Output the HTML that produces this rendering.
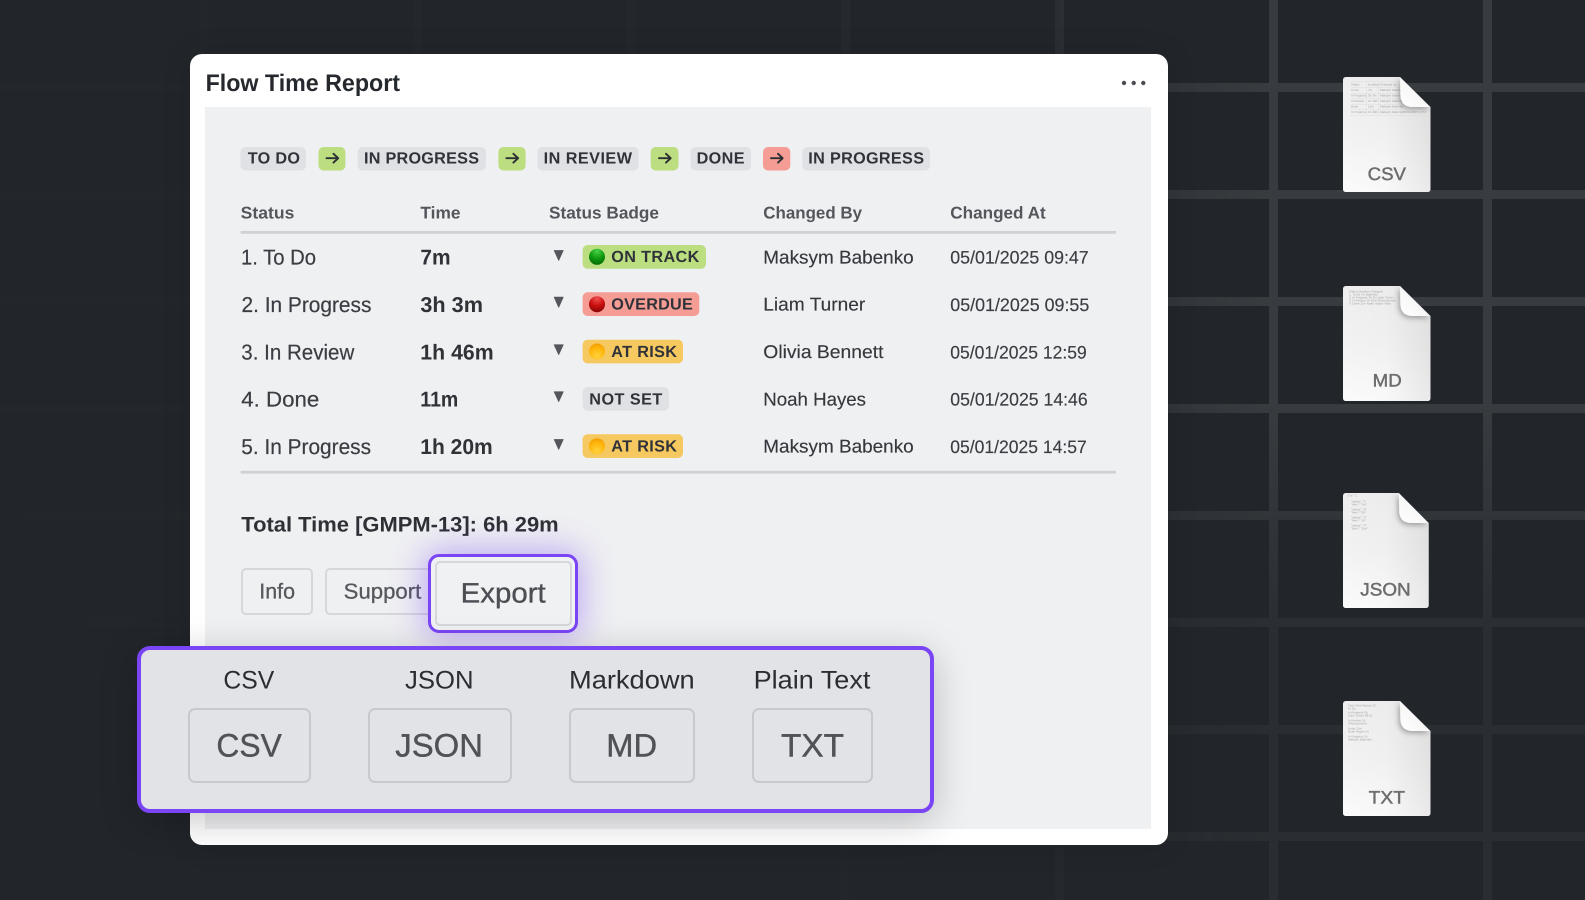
<!DOCTYPE html>
<html lang="en">
<head>
<meta charset="utf-8">
<title>Flow Time Report</title>
<style>
html,body{margin:0;padding:0;background:#22262b;width:1585px;height:900px;overflow:hidden}
*{box-sizing:border-box}
#root{position:relative;width:1585px;height:900px;overflow:hidden;background:#22262b;filter:blur(.35px)}
.abs{position:absolute}
.m1{position:absolute;left:0;top:0;width:1585px;height:900px;-webkit-mask-image:linear-gradient(to right,rgba(0,0,0,.06) 0,rgba(0,0,0,.1) 40%,rgba(0,0,0,.22) 62%,rgba(0,0,0,1) 80%);mask-image:linear-gradient(to right,rgba(0,0,0,.06) 0,rgba(0,0,0,.1) 40%,rgba(0,0,0,.22) 62%,rgba(0,0,0,1) 80%)}
.m2{position:absolute;left:0;top:0;width:1585px;height:900px;-webkit-mask-image:linear-gradient(to bottom,#000 0,#000 45%,rgba(0,0,0,.35) 72%,rgba(0,0,0,.35) 100%);mask-image:linear-gradient(to bottom,#000 0,#000 45%,rgba(0,0,0,.35) 72%,rgba(0,0,0,.35) 100%)}
#card{left:190px;top:54px;width:978px;height:791px;background:#fff;border-radius:12px;box-shadow:0 0 30px rgba(0,0,0,.12)}
#panel{left:205px;top:107px;width:946px;height:722px;background:#eff0f2}
#export{left:428px;top:554px;width:150px;height:79px;border:3.5px solid #7a45f5;border-radius:11px;box-shadow:0 0 32px 4px rgba(122,69,245,.42);background:#f0f1f3}
#exportin{left:435px;top:561px;width:137px;height:65px;border:2px solid #d6d7da;border-radius:5px;background:#f0f1f3}
#pop{left:137px;top:646px;width:797px;height:167px;border:4px solid #7a45f5;border-radius:13px;background:#e2e3e6;box-shadow:0 8px 38px rgba(0,0,0,.22)}
.btn{position:absolute;border:2px solid #d6d7da;border-radius:5px}
.pb{position:absolute;border:2px solid #c8c9cc;border-radius:7px;top:708px;height:75px}
svg{position:absolute;left:0;top:0;overflow:visible}
text{font-family:"Liberation Sans",sans-serif;text-rendering:geometricPrecision;transform:translate(0,-.6px)}
.chip{font-size:16.2px;font-weight:700;fill:#2f3238}
.hd{font-size:17px;font-weight:700;fill:#54565c}
.st{font-size:21.5px;fill:#3a3d42;stroke:#3a3d42;stroke-width:.2px;transform:translate(0,-1px)}
.tm{font-size:21.5px;font-weight:700;fill:#2f3236;transform:translate(0,-1px)}
.by{font-size:18.5px;fill:#34373c;stroke:#34373c;stroke-width:.15px}
.at{font-size:18px;fill:#3a3d42;stroke:#3a3d42;stroke-width:.15px}
.bd{font-size:16.2px;font-weight:700;fill:#2f3238}
.lab{font-size:25.5px;fill:#2b2d31}
.pt{font-size:32.5px;fill:#505257;stroke:#505257;stroke-width:.4px}
.fl{font-size:18px;fill:#6c6c6c;stroke:#6c6c6c;stroke-width:.45px}
.ti{font-size:3px;fill:#a4a4a4}
</style>
</head>
<body>
<div id="root">

<div class="m1"><div class="m2">
<svg width="1585" height="900">
<g fill="#383c40">
<rect x="199" y="0" width="9" height="900"/><rect x="413" y="0" width="9" height="900"/><rect x="627" y="0" width="9" height="900"/><rect x="841" y="0" width="9" height="900"/><rect x="1055" y="0" width="9" height="900"/><rect x="1269" y="0" width="9" height="900"/><rect x="1483" y="0" width="9" height="900"/>
<rect x="0" y="83" width="1585" height="9"/><rect x="0" y="190" width="1585" height="9"/><rect x="0" y="297" width="1585" height="9"/><rect x="0" y="404" width="1585" height="9"/><rect x="0" y="511" width="1585" height="9"/><rect x="0" y="618" width="1585" height="9"/><rect x="0" y="725" width="1585" height="9"/><rect x="0" y="832" width="1585" height="9"/>
</g>
</svg>
</div></div>

<div id="card" class="abs"></div>
<div id="panel" class="abs"></div>
<div class="btn" style="left:241px;top:568px;width:72px;height:47px"></div>
<div class="btn" style="left:325px;top:568px;width:115px;height:47px"></div>

<svg width="1585" height="900">
<defs>
<radialGradient id="dg" cx=".5" cy=".15" r=".85"><stop offset="0" stop-color="#49d049"/><stop offset=".55" stop-color="#0f9a0f"/><stop offset="1" stop-color="#056a05"/></radialGradient>
<radialGradient id="dr" cx=".5" cy=".15" r=".85"><stop offset="0" stop-color="#f25050"/><stop offset=".55" stop-color="#c90f0f"/><stop offset="1" stop-color="#8a0505"/></radialGradient>
<radialGradient id="da" cx=".5" cy=".8" r=".85"><stop offset="0" stop-color="#ffd23c"/><stop offset=".6" stop-color="#ffb60c"/><stop offset="1" stop-color="#f09a00"/></radialGradient>
</defs>

<text x="205.6" y="91.7" font-size="24" font-weight="700" fill="#25282d" textLength="194.4" lengthAdjust="spacingAndGlyphs">Flow Time Report</text>
<g fill="#4a4d52"><circle cx="1124" cy="83" r="2.2"/><circle cx="1133.7" cy="83" r="2.2"/><circle cx="1143.3" cy="83" r="2.2"/></g>

<!-- flow chips -->
<g fill="#dfe1e5">
<rect x="240.5" y="147" width="65.5" height="23.5" rx="5"/>
<rect x="357.6" y="147" width="128.4" height="23.5" rx="5"/>
<rect x="537.4" y="147" width="101.1" height="23.5" rx="5"/>
<rect x="690.5" y="147" width="60.5" height="23.5" rx="5"/>
<rect x="802.3" y="147" width="127.7" height="23.5" rx="5"/>
</g>
<g fill="#bcdd80">
<rect x="318.5" y="147" width="26.9" height="23.5" rx="5"/>
<rect x="498.4" y="147" width="27.2" height="23.5" rx="5"/>
<rect x="650.7" y="147" width="27.8" height="23.5" rx="5"/>
</g>
<rect x="763" y="147" width="27.3" height="23.5" rx="5" fill="#f59d95"/>
<g fill="none" stroke="#2b2e33" stroke-width="1.9" stroke-linecap="round" stroke-linejoin="round">
<path d="M326.5 158.2H338M333.5 153.8L338.2 158.2L333.5 162.6"/>
<path d="M506.4 158.2H517.9M513.4 153.8L518.1 158.2L513.4 162.6"/>
<path d="M659 158.2H670.5M666 153.8L670.7 158.2L666 162.6"/>
<path d="M771 158.2H782.5M778 153.8L782.7 158.2L778 162.6"/>
</g>
<text class="chip" x="247.7" y="164.3" textLength="52.3" lengthAdjust="spacing">TO DO</text>
<text class="chip" x="364" y="164.3" textLength="115" lengthAdjust="spacing">IN PROGRESS</text>
<text class="chip" x="543.6" y="164.3" textLength="88.4" lengthAdjust="spacing">IN REVIEW</text>
<text class="chip" x="696.6" y="164.3" textLength="47.9" lengthAdjust="spacing">DONE</text>
<text class="chip" x="808.3" y="164.3" textLength="115.7" lengthAdjust="spacing">IN PROGRESS</text>

<!-- header -->
<text class="hd" x="240.7" y="219.3" textLength="53.7" lengthAdjust="spacingAndGlyphs">Status</text>
<text class="hd" x="420.4" y="219.3" textLength="40.1" lengthAdjust="spacingAndGlyphs">Time</text>
<text class="hd" x="549" y="219.3" textLength="110" lengthAdjust="spacingAndGlyphs">Status Badge</text>
<text class="hd" x="763.3" y="219.3" textLength="98.7" lengthAdjust="spacingAndGlyphs">Changed By</text>
<text class="hd" x="950.3" y="219.3" textLength="95.4" lengthAdjust="spacingAndGlyphs">Changed At</text>
<rect x="240.7" y="231" width="875.3" height="2.8" fill="#d0d1d4"/>
<rect x="240.7" y="470.8" width="875.3" height="2.8" fill="#d0d1d4"/>

<!-- status -->
<text class="st" x="241" y="265.7" textLength="75" lengthAdjust="spacingAndGlyphs">1. To Do</text>
<text class="st" x="241.5" y="313" textLength="129.9" lengthAdjust="spacingAndGlyphs">2. In Progress</text>
<text class="st" x="241.3" y="360.3" textLength="113" lengthAdjust="spacingAndGlyphs">3. In Review</text>
<text class="st" x="241.3" y="407.3" textLength="78" lengthAdjust="spacingAndGlyphs">4. Done</text>
<text class="st" x="241.3" y="455" textLength="129.7" lengthAdjust="spacingAndGlyphs">5. In Progress</text>

<!-- time -->
<text class="tm" x="420.4" y="265.7" textLength="30.2" lengthAdjust="spacingAndGlyphs">7m</text>
<text class="tm" x="420.4" y="313" textLength="62.6" lengthAdjust="spacingAndGlyphs">3h 3m</text>
<text class="tm" x="420.3" y="360.3" textLength="73.4" lengthAdjust="spacingAndGlyphs">1h 46m</text>
<text class="tm" x="420.3" y="407.3" textLength="38" lengthAdjust="spacingAndGlyphs">11m</text>
<text class="tm" x="420.3" y="455" textLength="72.4" lengthAdjust="spacingAndGlyphs">1h 20m</text>

<!-- triangles -->
<g fill="#54565c" stroke="#54565c" stroke-width=".8" stroke-linejoin="round">
<path d="M554.2 250.5H563.2L558.7 260.3Z"/>
<path d="M554.2 297.2H563.2L558.7 307.2Z"/>
<path d="M554.2 344.8H563.2L558.7 354.6Z"/>
<path d="M554.2 391.8H563.2L558.7 401.6Z"/>
<path d="M554.2 439.5H563.2L558.7 449.3Z"/>
</g>

<!-- badges -->
<rect x="582.6" y="245" width="123.4" height="23.7" rx="5" fill="#bbde80"/>
<rect x="582.6" y="292.3" width="116.7" height="23.7" rx="5" fill="#f59d95"/>
<rect x="582.6" y="339.7" width="100.4" height="23.7" rx="5" fill="#f6c860"/>
<rect x="582.6" y="387" width="86.4" height="23.7" rx="5" fill="#dfe1e5"/>
<rect x="582.6" y="434.3" width="100.4" height="23.7" rx="5" fill="#f6c860"/>
<circle cx="597" cy="256.8" r="8" fill="url(#dg)"/>
<circle cx="597" cy="304.2" r="8" fill="url(#dr)"/>
<circle cx="597" cy="351.5" r="8" fill="url(#da)"/>
<circle cx="597" cy="446.2" r="8" fill="url(#da)"/>
<text class="bd" x="611.3" y="262.7" textLength="88" lengthAdjust="spacing">ON TRACK</text>
<text class="bd" x="611.3" y="310" textLength="81.5" lengthAdjust="spacing">OVERDUE</text>
<text class="bd" x="611.3" y="357.7" textLength="65.7" lengthAdjust="spacing">AT RISK</text>
<text class="bd" x="589.3" y="405" textLength="73" lengthAdjust="spacing">NOT SET</text>
<text class="bd" x="611.3" y="452.3" textLength="65.7" lengthAdjust="spacing">AT RISK</text>

<!-- changed by -->
<text class="by" x="763.3" y="264" textLength="150.4" lengthAdjust="spacingAndGlyphs">Maksym Babenko</text>
<text class="by" x="763.3" y="311.3" textLength="102" lengthAdjust="spacingAndGlyphs">Liam Turner</text>
<text class="by" x="763.3" y="358.6" textLength="120.2" lengthAdjust="spacingAndGlyphs">Olivia Bennett</text>
<text class="by" x="763.3" y="405.9" textLength="102.7" lengthAdjust="spacingAndGlyphs">Noah Hayes</text>
<text class="by" x="763.3" y="453" textLength="150.4" lengthAdjust="spacingAndGlyphs">Maksym Babenko</text>

<!-- changed at -->
<text class="at" x="950.3" y="264" textLength="138.4" lengthAdjust="spacingAndGlyphs">05/01/2025 09:47</text>
<text class="at" x="950.3" y="311.5" textLength="139" lengthAdjust="spacingAndGlyphs">05/01/2025 09:55</text>
<text class="at" x="950.3" y="359" textLength="136.4" lengthAdjust="spacingAndGlyphs">05/01/2025 12:59</text>
<text class="at" x="950.3" y="406" textLength="137.4" lengthAdjust="spacingAndGlyphs">05/01/2025 14:46</text>
<text class="at" x="950.3" y="453.4" textLength="136.4" lengthAdjust="spacingAndGlyphs">05/01/2025 14:57</text>

<text x="241.3" y="531.9" font-size="21px" font-weight="700" fill="#2d3035" textLength="317.4" lengthAdjust="spacingAndGlyphs">Total Time [GMPM-13]: 6h 29m</text>
<text x="259.3" y="599.3" font-size="21.5" fill="#56585d" stroke="#56585d" stroke-width=".3" textLength="35.7" lengthAdjust="spacingAndGlyphs">Info</text>
<text x="343.7" y="599.3" font-size="21.5" fill="#56585d" stroke="#56585d" stroke-width=".3" textLength="77.6" lengthAdjust="spacingAndGlyphs">Support</text>
</svg>

<div id="export" class="abs"></div>
<div id="exportin" class="abs"></div>
<div id="pop" class="abs"></div>
<div class="pb" style="left:188px;width:123px"></div>
<div class="pb" style="left:367.5px;width:144px"></div>
<div class="pb" style="left:569px;width:126px"></div>
<div class="pb" style="left:752px;width:120.5px"></div>

<svg width="1585" height="900">
<defs>
<linearGradient id="pg" x1="0" y1="0" x2="0" y2="1"><stop offset="0" stop-color="#eeeeee"/><stop offset=".5" stop-color="#f2f2f2"/><stop offset="1" stop-color="#fbfbfb"/></linearGradient>
<linearGradient id="ph" x1="0" y1="0" x2="1" y2="0"><stop offset="0" stop-color="#000" stop-opacity="0"/><stop offset=".5" stop-color="#000" stop-opacity=".01"/><stop offset="1" stop-color="#000" stop-opacity=".07"/></linearGradient>
<linearGradient id="fg" x1="0" y1="1" x2="1" y2="0"><stop offset="0" stop-color="#ffffff"/><stop offset=".55" stop-color="#f6f6f6"/><stop offset="1" stop-color="#d6d6d6"/></linearGradient>
<filter id="fs" x="-60%" y="-60%" width="220%" height="220%"><feDropShadow dx="-1.5" dy="2" stdDeviation="2.6" flood-color="#000" flood-opacity=".32"/></filter>
<clipPath id="fc"><path d="M2 0H57L87 30V112Q87 115 84 115H3Q0 115 0 112V3Q0 0 3 0Z"/></clipPath>
<g id="page">
<path d="M3 0H57L87.5 30V112Q87.5 115 84.5 115H3Q0 115 0 112V3Q0 0 3 0Z" fill="url(#pg)"/>
<path d="M3 0H57L87.5 30V112Q87.5 115 84.5 115H3Q0 115 0 112V3Q0 0 3 0Z" fill="url(#ph)"/>
</g>
<g id="fold">
<g clip-path="url(#fc)"><path d="M57 0L88 30H70Q59 30 57.5 20Z" fill="url(#fg)" filter="url(#fs)"/></g>
</g>
</defs>

<text class="lab" x="223.4" y="689" textLength="50.9" lengthAdjust="spacingAndGlyphs">CSV</text>
<text class="lab" x="405" y="689" textLength="68.5" lengthAdjust="spacingAndGlyphs">JSON</text>
<text class="lab" x="569" y="689" textLength="125.7" lengthAdjust="spacingAndGlyphs">Markdown</text>
<text class="lab" x="753.6" y="689" textLength="116.8" lengthAdjust="spacingAndGlyphs">Plain Text</text>
<text class="pt" x="216.4" y="757" textLength="65.4" lengthAdjust="spacingAndGlyphs">CSV</text>
<text class="pt" x="395.3" y="757" textLength="87.7" lengthAdjust="spacingAndGlyphs">JSON</text>
<text class="pt" x="606.3" y="757" textLength="50.9" lengthAdjust="spacingAndGlyphs">MD</text>
<text class="pt" x="781" y="757" textLength="63" lengthAdjust="spacingAndGlyphs">TXT</text>
<text x="460.7" y="603" font-size="28" fill="#4c4e54" stroke="#4c4e54" stroke-width=".35" textLength="85" lengthAdjust="spacingAndGlyphs">Export</text>

<!-- CSV file -->
<g transform="translate(1343,77)">
<use href="#page"/>
<g clip-path="url(#fc)">
<g fill="#dcdcdc"><rect x="7" y="4.5" width="77" height=".5"/><rect x="7" y="10.5" width="77" height=".5"/><rect x="7" y="16" width="77" height=".5"/><rect x="7" y="21.5" width="77" height=".5"/><rect x="7" y="27" width="77" height=".5"/><rect x="7" y="32.5" width="77" height=".5"/><rect x="7" y="38" width="77" height=".5"/><rect x="23.5" y="4.5" width=".5" height="33.5"/><rect x="35.5" y="4.5" width=".5" height="33.5"/><rect x="58" y="4.5" width=".5" height="33.5"/></g>
<text class="ti" x="8" y="9">Status</text><text class="ti" x="25" y="9">Duration</text><text class="ti" x="37" y="9">Changed By</text>
<text class="ti" x="8" y="14.5">To Do</text><text class="ti" x="25" y="14.5">7m</text><text class="ti" x="37" y="14.5">Maksym Babenko</text>
<text class="ti" x="8" y="20">In Progress</text><text class="ti" x="25" y="20">3h 3m</text><text class="ti" x="37" y="20">Maksym Babenko</text>
<text class="ti" x="8" y="25.5">In Review</text><text class="ti" x="25" y="25.5">1h 46m</text><text class="ti" x="37" y="25.5">Maksym Babenko</text>
<text class="ti" x="8" y="31">Done</text><text class="ti" x="25" y="31">11m</text><text class="ti" x="37" y="31">Maksym Babenko</text>
<text class="ti" x="8" y="36.5">In Progress</text><text class="ti" x="25" y="36.5">1h 20m</text><text class="ti" x="37" y="36.5">Maksym Babenko</text><text class="ti" x="60" y="36.5">05/01/2025 14:57</text>
</g>
<use href="#fold"/>
</g>
<text class="fl" x="1367.7" y="180.7" textLength="38.3" lengthAdjust="spacingAndGlyphs">CSV</text>

<!-- MD file -->
<g transform="translate(1343,286)">
<use href="#page"/>
<text class="ti" x="6" y="7">Status Duration Changed</text><text class="ti" x="6" y="10">1. To Do 7m Babenko</text><text class="ti" x="6" y="13">2. In Progress 3h 3m Liam Turner</text><text class="ti" x="6" y="16">3. In Review 1h 46m Olivia Bennett</text><text class="ti" x="6" y="19">4. Done 11m Noah Hayes Total</text>
<use href="#fold"/>
</g>
<text class="fl" x="1372.7" y="387.3" textLength="29" lengthAdjust="spacingAndGlyphs">MD</text>

<!-- JSON file -->
<g transform="translate(1343,493)">
<use href="#page" transform="scale(.98,1)"/>
<text class="ti" x="4" y="4">[ {"s": 1,</text><text class="ti" x="8" y="10">"status": "1"</text><text class="ti" x="8" y="13">"time": "7m"</text><text class="ti" x="8" y="18">"status": "2"</text><text class="ti" x="8" y="21">"time": "3h"</text><text class="ti" x="8" y="26">"status": "3"</text><text class="ti" x="8" y="29">"time": "1h"</text><text class="ti" x="8" y="34">"status": "4"</text><text class="ti" x="8" y="37">"time": "11m"</text>
<use href="#fold" transform="scale(.98,1)"/>
</g>
<text class="fl" x="1360.3" y="596" textLength="50.4" lengthAdjust="spacingAndGlyphs">JSON</text>

<!-- TXT file -->
<g transform="translate(1343,701)">
<use href="#page"/>
<text class="ti" x="5" y="6">Flow Time Report 13</text><text class="ti" x="5" y="9">To Do</text><text class="ti" x="5" y="13">In Progress 3h</text><text class="ti" x="5" y="16">Liam Turner 09:55</text><text class="ti" x="5" y="21">In Review 1h</text><text class="ti" x="5" y="24">Olivia Bennett</text><text class="ti" x="5" y="29">Done 11m</text><text class="ti" x="5" y="32">Noah Hayes 14</text><text class="ti" x="5" y="37">In Progress 1h</text><text class="ti" x="5" y="40">Maksym Babenko</text>
<use href="#fold"/>
</g>
<text class="fl" x="1368.7" y="804" textLength="36.3" lengthAdjust="spacingAndGlyphs">TXT</text>
</svg>
</div>
</body>
</html>
